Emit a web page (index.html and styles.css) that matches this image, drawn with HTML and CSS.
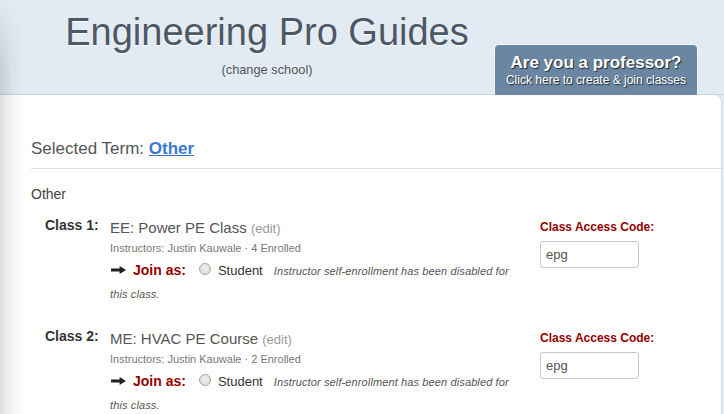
FILE: index.html
```html
<!DOCTYPE html>
<html>
<head>
<meta charset="utf-8">
<link rel="stylesheet" href="styles.css">
</head>
<body>
<div class="edge-shadow"></div>
<header class="header">
  <div class="brand">
    <h1 class="title">Engineering Pro Guides</h1>
    <a class="change">(change school)</a>
  </div>
  <a class="prof-btn">
    <span class="prof-big">Are you a professor?</span>
    <span class="prof-small">Click here to create &amp; join classes</span>
  </a>
</header>
<main class="card">
  <div class="term">Selected Term: <a class="term-link">Other</a></div>
  <hr class="rule">
  <div class="section">Other</div>

  <div class="class-row">
    <div class="class-label">Class 1:</div>
    <div class="class-main">
      <div class="class-title">EE: Power PE Class <span class="edit">(edit)</span></div>
      <div class="instructors">Instructors: Justin Kauwale · 4 Enrolled</div>
      <div class="join">
        <svg class="arrow" width="15" height="8" viewBox="0 0 15 8"><path d="M0 2.6h8.6V0L15 4l-6.4 4V5.4H0z" fill="#222"/></svg><span class="join-as">Join as:</span><span class="radio"></span><span class="student">Student</span><span class="note">Instructor self-enrollment has been disabled for this class.</span>
      </div>
    </div>
    <div class="access">
      <div class="access-label">Class Access Code:</div>
      <div class="code-input">epg</div>
    </div>
  </div>

  <div class="class-row">
    <div class="class-label">Class 2:</div>
    <div class="class-main">
      <div class="class-title">ME: HVAC PE Course <span class="edit">(edit)</span></div>
      <div class="instructors">Instructors: Justin Kauwale · 2 Enrolled</div>
      <div class="join">
        <svg class="arrow" width="15" height="8" viewBox="0 0 15 8"><path d="M0 2.6h8.6V0L15 4l-6.4 4V5.4H0z" fill="#222"/></svg><span class="join-as">Join as:</span><span class="radio"></span><span class="student">Student</span><span class="note">Instructor self-enrollment has been disabled for this class.</span>
      </div>
    </div>
    <div class="access">
      <div class="access-label">Class Access Code:</div>
      <div class="code-input">epg</div>
    </div>
  </div>
</main>
</body>
</html>
```
FILE: styles.css
```css
html, body {
  margin: 0;
  padding: 0;
}
body {
  background: #e2ebf4;
  font-family: "Liberation Sans", Arial, sans-serif;
  color: #444;
  overflow: hidden;
  height: 414px;
  position: relative;
}
.edge-shadow {
  position: absolute;
  left: 0;
  top: 0;
  width: 24px;
  height: 414px;
  background: linear-gradient(to right, rgba(0,0,0,0.13), rgba(0,0,0,0.04) 50%, rgba(0,0,0,0));
  -webkit-mask-image: linear-gradient(to bottom, transparent 0, black 70px);
  mask-image: linear-gradient(to bottom, transparent 0, black 70px);
  z-index: 5;
  pointer-events: none;
}
.header {
  display: flex;
  height: 94px;
  border-bottom: 1px solid #cdd6e0;
  box-sizing: content-box;
}
.brand {
  margin-left: 40px;
  width: 454px;
  text-align: center;
  padding-top: 13px;
}
.title {
  margin: 0;
  font-size: 38px;
  line-height: 38px;
  font-weight: normal;
  color: #4c5864;
  text-shadow: 0 1px 1px #fff;
}
.change {
  display: block;
  margin-top: 11px;
  font-size: 12.8px;
  line-height: 15px;
  color: #555;
}
.prof-btn {
  align-self: flex-end;
  box-sizing: border-box;
  width: 204px;
  height: 51px;
  margin-bottom: -1px;
  background: #6a86a2;
  border: 1px solid #f2f5f8;
  border-bottom: none;
  border-radius: 5px 5px 0 0;
  text-align: center;
  color: #fff;
  text-shadow: 1px 1px 1px rgba(0,0,0,0.7);
  padding-top: 8px;
  position: relative;
  z-index: 2;
}
.prof-big {
  display: block;
  font-size: 17px;
  line-height: 20px;
  font-weight: bold;
}
.prof-small {
  display: block;
  font-size: 12px;
  line-height: 15px;
}
.card {
  display: block;
  width: 722px;
  height: 330px;
  box-sizing: border-box;
  background: #fff;
  border-top-right-radius: 8px;
  border-right: 1px solid #d8dde3;
  padding: 44px 0 0 31px;
}
.term {
  font-size: 17px;
  line-height: 20px;
  color: #555;
}
.term-link {
  color: #3a78d0;
  font-weight: bold;
  text-decoration: underline;
}
.rule {
  margin: 9px 0 0 0;
  border: none;
  border-top: 1px solid #dcdcdc;
  height: 0;
}
.section {
  margin-top: 15px;
  font-size: 14px;
  line-height: 20px;
  color: #444;
}
.class-row {
  display: grid;
  grid-template-columns: 65px 410px 1fr;
  column-gap: 0;
  margin-top: 11px;
  margin-left: 14px;
}
.class-row + .class-row {
  margin-top: 22px;
}
.class-label {
  font-size: 14px;
  line-height: 20px;
  font-weight: bold;
  color: #333;
}
.class-main {
  padding-top: 3px;
}
.class-title {
  font-size: 15px;
  line-height: 20px;
  color: #555;
}
.edit {
  font-size: 13px;
  color: #999;
}
.instructors {
  margin-top: 2px;
  font-size: 11px;
  line-height: 14px;
  color: #777;
}
.join {
  margin-top: 4px;
  font-size: 14px;
  line-height: 22px;
}
.arrow {
  display: inline-block;
  vertical-align: 1px;
  margin-left: 1px;
}
.join-as {
  margin-left: 7px;
  font-weight: bold;
  color: #960000;
}
.radio {
  display: inline-block;
  box-sizing: border-box;
  width: 12px;
  height: 12px;
  margin: 0 7px 0 13px;
  border-radius: 50%;
  border: 1px solid #a6a6a6;
  background: radial-gradient(circle at 50% 40%, #f0f0f0, #d6d6d6);
}
.student {
  font-size: 13px;
  color: #333;
}
.note {
  margin-left: 11px;
  font-size: 11px;
  line-height: 20px;
  font-style: italic;
  letter-spacing: 0.12px;
  color: #555;
}
.access {
  padding-top: 4px;
  padding-left: 20px;
}
.access-label {
  font-size: 12px;
  line-height: 16px;
  font-weight: bold;
  color: #960000;
}
.code-input {
  margin-top: 6px;
  box-sizing: border-box;
  width: 99px;
  height: 27px;
  border: 1px solid #c8c8c8;
  border-radius: 3px;
  padding-left: 5px;
  font-size: 13px;
  line-height: 25px;
  color: #555;
}
```
